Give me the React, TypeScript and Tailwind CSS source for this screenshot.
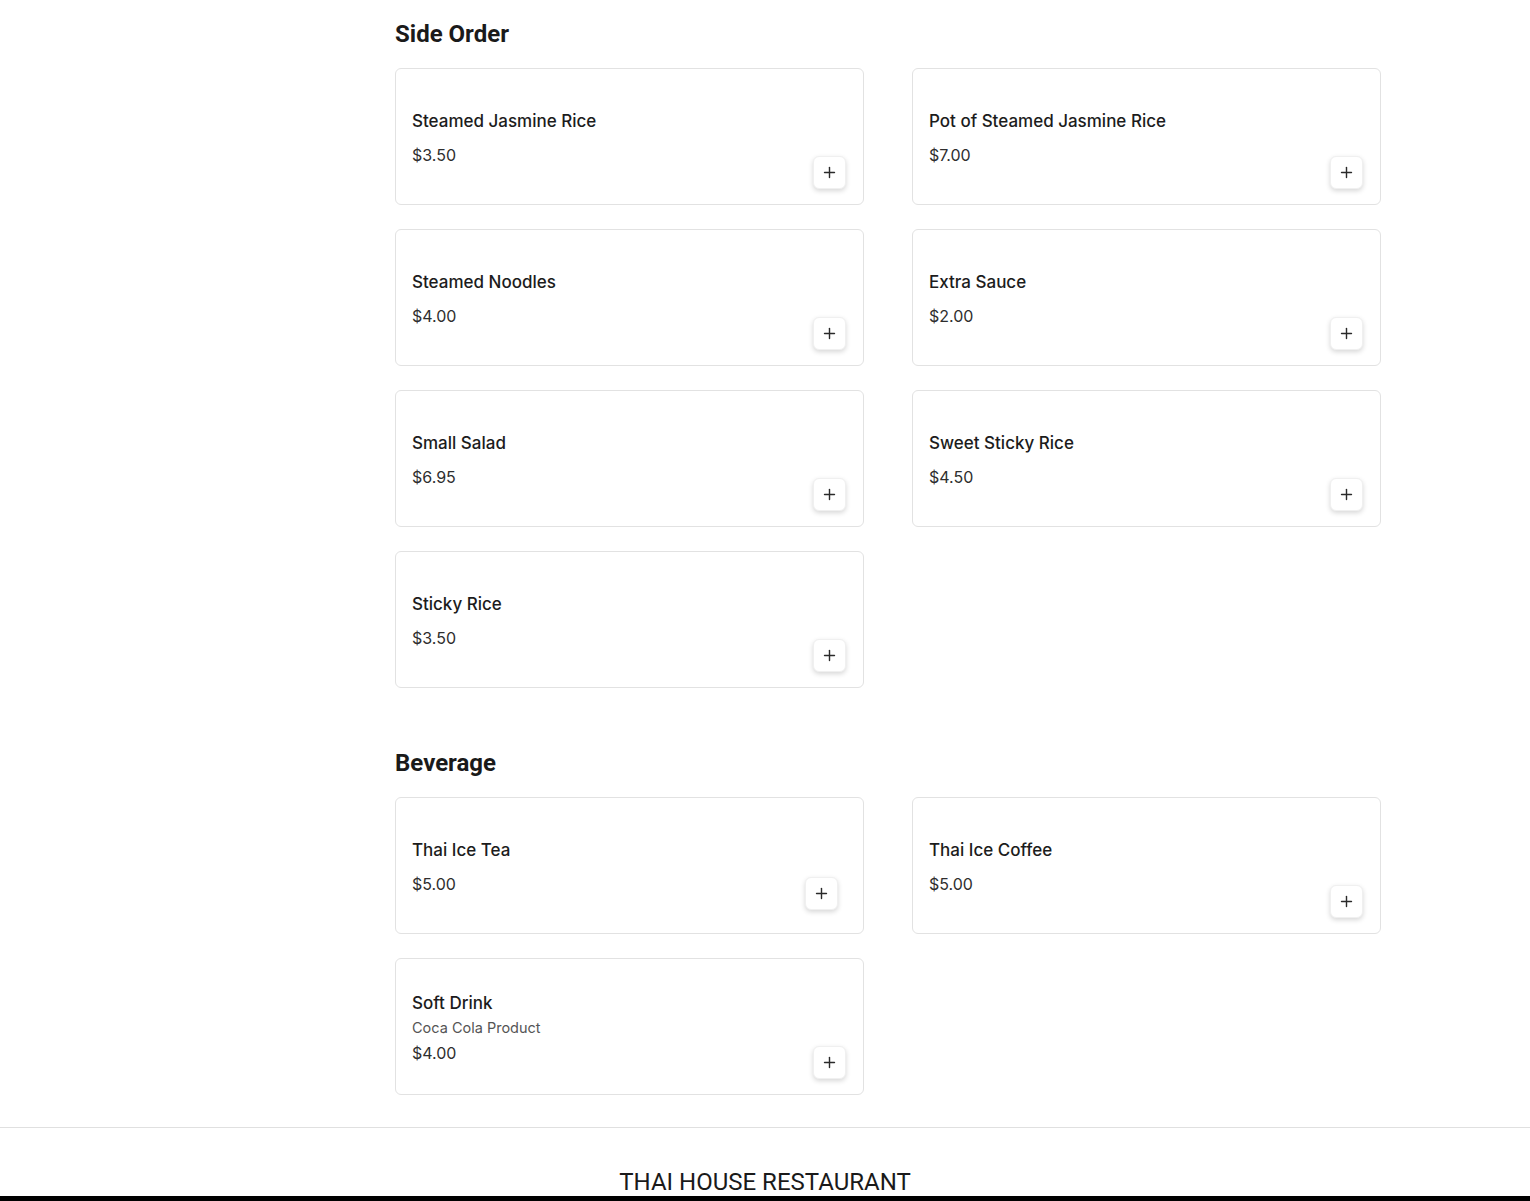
import React from "react";
import { Plus } from "lucide-react";

type Item = { name: string; price: string; desc?: string; btn?: string };

const sideOrders: Item[] = [
  { name: "Steamed Jasmine Rice", price: "$3.50" },
  { name: "Pot of Steamed Jasmine Rice", price: "$7.00" },
  { name: "Steamed Noodles", price: "$4.00" },
  { name: "Extra Sauce", price: "$2.00" },
  { name: "Small Salad", price: "$6.95" },
  { name: "Sweet Sticky Rice", price: "$4.50" },
  { name: "Sticky Rice", price: "$3.50" },
];

const beverages: Item[] = [
  { name: "Thai Ice Tea", price: "$5.00", btn: "right-[25px] bottom-[23px]" },
  { name: "Thai Ice Coffee", price: "$5.00" },
  { name: "Soft Drink", price: "$4.00", desc: "Coca Cola Product" },
];

function Card({ item }: { item: Item }) {
  return (
    <div className="relative flex h-[137px] items-center rounded-md border border-[#e2e2e2] bg-white px-4 pt-[2px]">
      <div className="flex flex-col">
        <div className="text-[17px] font-medium leading-6 text-[#1c1c1c]">{item.name}</div>
        {item.desc ? (
          <>
            <div className="mt-[3px] text-[14.5px] leading-5 text-[#555]">{item.desc}</div>
            <div className="mt-[3px] text-[16px] leading-6 text-[#2e2e2e]">{item.price}</div>
          </>
        ) : (
          <div className="mt-[10px] text-[16px] leading-6 text-[#2e2e2e]">{item.price}</div>
        )}
      </div>
      <button
        className={`absolute ${item.btn ?? "right-[17px] bottom-[15px]"} flex h-[33px] w-[33px] items-center justify-center rounded-md border border-[#f0f0f0] bg-white shadow-[0_2px_5px_rgba(0,0,0,0.16)]`}
      >
        <Plus size={17} strokeWidth={2} color="#2a2a2a" />
      </button>
    </div>
  );
}

export default function App() {
  return (
    <div className="flex h-[1201px] flex-col overflow-hidden bg-white" style={{ fontFamily: "Inter, 'Noto Sans', sans-serif" }}>
      <div className="flex">
        <div className="w-[395px] shrink-0" />
        <div className="w-[986px] pt-[18px]">
          <h2 className="mb-[18px] text-[24px] font-bold leading-8 text-[#1a1a1a]" style={{ fontFamily: "Roboto, sans-serif" }}>
            Side Order
          </h2>
          <div className="grid grid-cols-2 gap-x-12 gap-y-6">
            {sideOrders.map((it) => (
              <Card key={it.name} item={it} />
            ))}
          </div>
          <h2 className="mt-[59px] mb-[18px] text-[24px] font-bold leading-8 text-[#1a1a1a]" style={{ fontFamily: "Roboto, sans-serif" }}>
            Beverage
          </h2>
          <div className="grid grid-cols-2 gap-x-12 gap-y-6">
            {beverages.map((it) => (
              <Card key={it.name} item={it} />
            ))}
          </div>
        </div>
      </div>
      <footer className="mt-[32px] border-t border-[#e0e0e0] pt-[40px]">
        <div className="text-center text-[24px] leading-[28px] text-[#1a1a1a]" style={{ fontFamily: "Roboto, sans-serif" }}>
          THAI HOUSE RESTAURANT
        </div>
        <div className="h-[40px] bg-black" />
      </footer>
    </div>
  );
}
